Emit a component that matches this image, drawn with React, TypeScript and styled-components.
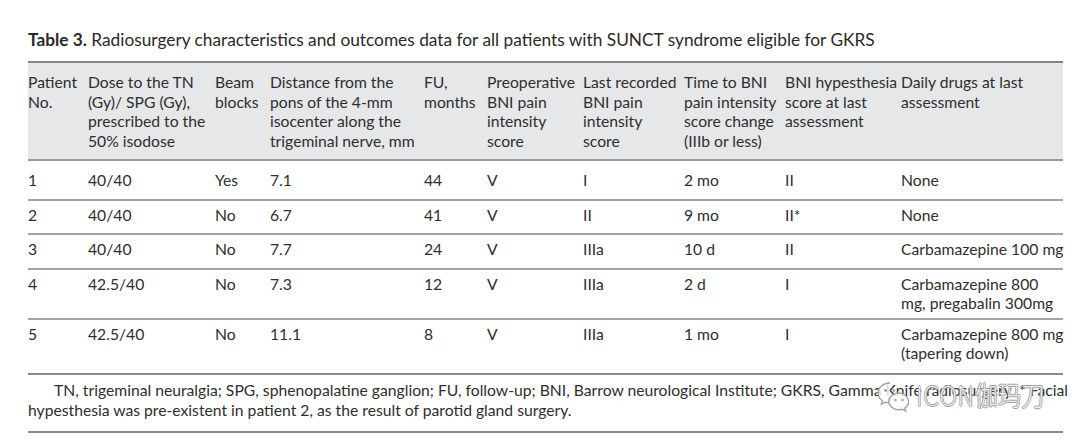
import React from "react";
import styled, { createGlobalStyle } from "styled-components";

const GlobalStyle = createGlobalStyle`
  html, body {
    margin: 0;
    padding: 0;
    background: #ffffff;
  }
  body {
    font-family: Lato, "Liberation Sans", sans-serif;
    color: #2e2e2e;
  }
`;

interface Row {
  cells: string[];
  first?: boolean;
  bottomPad?: number;
}

// line breaks follow the printed table
const headers = [
  "Patient\nNo.",
  "Dose to the TN\n(Gy)/ SPG (Gy),\nprescribed to the\n50% isodose",
  "Beam\nblocks",
  "Distance from the\npons of the 4-mm\nisocenter along the\ntrigeminal nerve, mm",
  "FU,\nmonths",
  "Preoperative\nBNI pain\nintensity\nscore",
  "Last recorded\nBNI pain\nintensity\nscore",
  "Time to BNI\npain intensity\nscore change\n(IIIb or less)",
  "BNI hypesthesia\nscore at last\nassessment",
  "Daily drugs at last\nassessment",
];

// column widths taken from the printed table
const widths = [60, 127, 55, 154, 63, 96, 101, 101, 116, 162];

const rows: Row[] = [
  { cells: ["1", "40/40", "Yes", "7.1", "44", "V", "I", "2 mo", "II", "None"], first: true },
  { cells: ["2", "40/40", "No", "6.7", "41", "V", "II", "9 mo", "II*", "None"] },
  { cells: ["3", "40/40", "No", "7.7", "24", "V", "IIIa", "10 d", "II", "Carbamazepine 100 mg"] },
  {
    cells: ["4", "42.5/40", "No", "7.3", "12", "V", "IIIa", "2 d", "I", "Carbamazepine 800\nmg, pregabalin 300mg"],
    bottomPad: 4,
  },
  {
    cells: ["5", "42.5/40", "No", "11.1", "8", "V", "IIIa", "1 mo", "I", "Carbamazepine 800 mg\n(tapering down)"],
    bottomPad: 9,
  },
];

const App: React.FC = () => {
  return (
    <>
      <GlobalStyle />
      <Page>
        <Title>
          <strong>Table 3.</strong> Radiosurgery characteristics and outcomes data for all patients with SUNCT
          syndrome eligible for GKRS
        </Title>
        <Table>
          <colgroup>
            {widths.map((w, i) => (
              <col key={i} style={{ width: w }} />
            ))}
          </colgroup>
          <thead>
            <tr>
              {headers.map((h, i) => (
                <HeadCell key={i}>{h}</HeadCell>
              ))}
            </tr>
          </thead>
          <tbody>
            {rows.map((row, r) => (
              <BodyRow key={r} $last={r === rows.length - 1}>
                {row.cells.map((c, i) => (
                  <Cell key={i} $first={row.first} $bottomPad={row.bottomPad}>
                    {c}
                  </Cell>
                ))}
              </BodyRow>
            ))}
          </tbody>
        </Table>
        <Footnote>
          <Note>
            TN, trigeminal neuralgia; SPG, sphenopalatine ganglion; FU, follow-up; BNI, Barrow neurological
            Institute; GKRS, Gamma Knife radiosurgery. * Facial
            <br />
            hypesthesia was pre-existent in patient 2, as the result of parotid gland surgery.
          </Note>
          <Watermark>
            <svg width="36" height="36" viewBox="0 0 36 36" fill="none">
              <path
                d="M14 4C7.4 4 2 8.5 2 14c0 3.1 1.7 5.9 4.4 7.7l-1.1 3.5 4-2.1c1.4.4 3 .7 4.6.7"
                stroke="#a0a0a0"
                strokeWidth="1.3"
                fill="rgba(255,255,255,0.8)"
              />
              <path
                d="M23 14c-5.6 0-10.2 3.8-10.2 8.4s4.6 8.4 10.2 8.4c1.2 0 2.4-.2 3.4-.5l3.4 1.8-1-3c2.3-1.5 3.7-3.9 3.7-6.7 0-4.6-4.6-8.4-9.5-8.4z"
                stroke="#a0a0a0"
                strokeWidth="1.3"
                fill="rgba(255,255,255,0.8)"
              />
              <circle cx="9.5" cy="11.5" r="1.4" fill="#a0a0a0" />
              <circle cx="18" cy="11.5" r="1.4" fill="#a0a0a0" />
              <circle cx="19.5" cy="21" r="1.2" fill="#a0a0a0" />
              <circle cx="26.5" cy="21" r="1.2" fill="#a0a0a0" />
            </svg>
            <WatermarkText>ICON伽玛刀</WatermarkText>
          </Watermark>
        </Footnote>
      </Page>
    </>
  );
};

export default App;

const Page = styled.div`
  width: 1035px;
  padding: 29px 0 0 28px;
`;

const Title = styled.div`
  font-size: 17.3px;
  line-height: 22px;
  color: #2a2a2a;
  margin-bottom: 10px;
  white-space: nowrap;

  strong {
    font-weight: 700;
  }
`;

const Table = styled.table`
  width: 1035px;
  border-collapse: collapse;
  table-layout: fixed;
  font-size: 15.7px;
  line-height: 19.5px;
`;

const HeadCell = styled.th`
  background: #e6e7e8;
  font-weight: 400;
  text-align: left;
  vertical-align: top;
  white-space: pre;
  padding: 10px 0 8px 0;
  border-top: 2px solid #858585;
  border-bottom: 2px solid #9a9a9a;
`;

const BodyRow = styled.tr<{ $last?: boolean }>`
  border-bottom: 2px solid ${(p) => (p.$last ? "#8a8a8a" : "#a3a3a3")};
`;

const Cell = styled.td<{ $first?: boolean; $bottomPad?: number }>`
  vertical-align: top;
  text-align: left;
  white-space: pre;
  padding: ${(p) => (p.$first ? 10 : 5)}px 0 ${(p) => p.$bottomPad ?? 8}px 0;
`;

const Footnote = styled.div`
  position: relative;
  border-bottom: 2px solid #8a8a8a;
  padding: 5px 0 10px;
`;

const Note = styled.p`
  margin: 0;
  font-size: 15.7px;
  line-height: 20.5px;
  text-indent: 26px;
  white-space: nowrap;
`;

const Watermark = styled.div`
  position: absolute;
  left: 848px;
  top: 4px;
  display: flex;
  align-items: center;
  gap: 4px;
  white-space: nowrap;
  pointer-events: none;
`;

const WatermarkText = styled.span`
  display: inline-block;
  font-family: "DejaVu Sans", "Noto Sans CJK SC", sans-serif;
  font-weight: 300;
  font-size: 27px;
  line-height: 30px;
  color: rgba(255, 255, 255, 0.85);
  text-shadow: 1px 0 0 #a0a0a0, -1px 0 0 #a0a0a0, 0 1px 0 #a0a0a0, 0 -1px 0 #a0a0a0;
  transform: scaleX(0.86);
  transform-origin: left center;
`;
